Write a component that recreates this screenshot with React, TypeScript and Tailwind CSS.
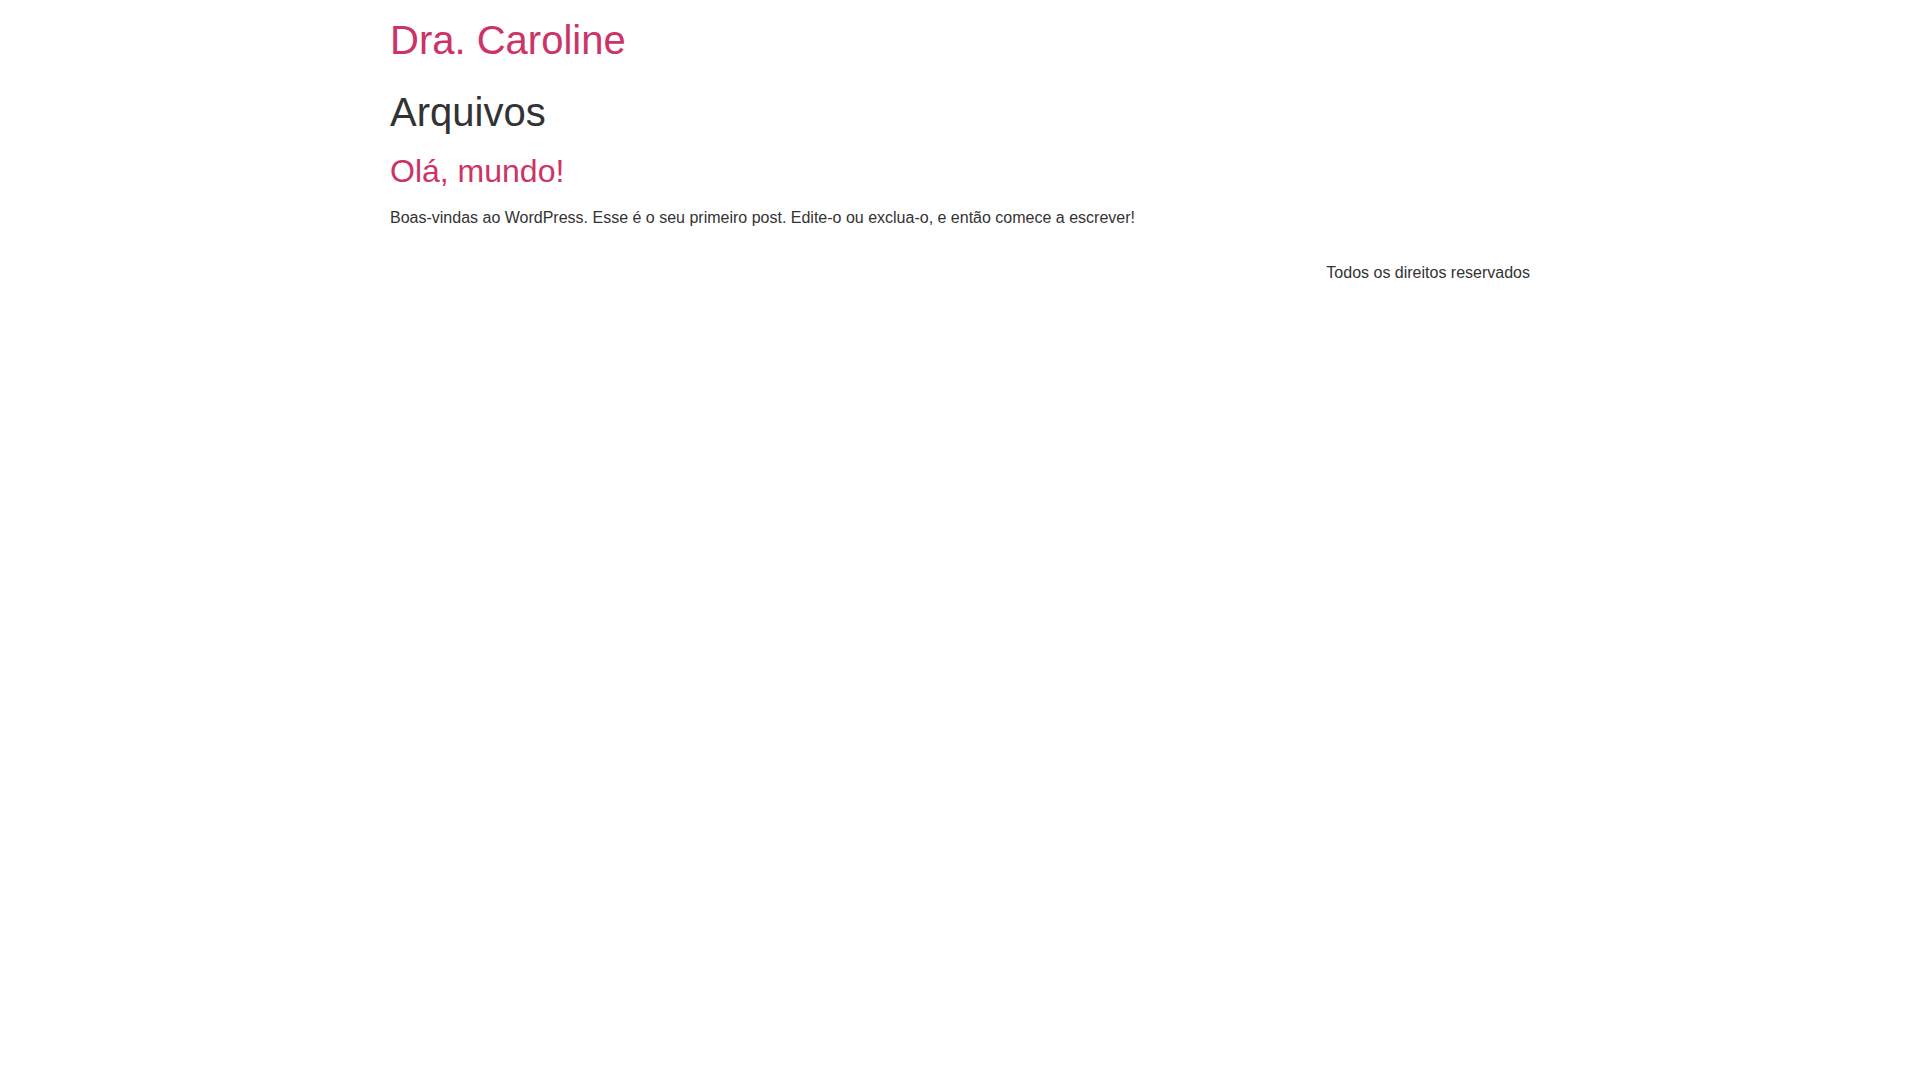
// Archive page (WordPress, Hello theme look)
const App = () => {
  return (
    <div className="min-h-screen bg-white text-[#333333] text-base leading-normal font-['Liberation_Sans',Arial,sans-serif]">
      <header className="mx-auto max-w-[1140px] pt-4 pb-4">
        <div className="site-branding">
          <h1 className="m-0 mb-2 text-[40px] leading-[1.2] font-normal">
            <a href="#" className="text-[#cc3366] no-underline">Dra. Caroline</a>
          </h1>
        </div>
      </header>

      <main className="mx-auto max-w-[1140px]">
        <div className="page-header">
          <h1 className="m-0 mb-4 text-[40px] leading-[1.2] font-normal">Arquivos</h1>
        </div>
        <div className="page-content">
          <article>
            <h2 className="m-0 mb-4 text-[32px] leading-[1.2] font-normal">
              <a href="#" className="text-[#cc3366] no-underline">Olá, mundo!</a>
            </h2>
            <p className="m-0 mb-[15px]">
              Boas-vindas ao WordPress. Esse é o seu primeiro post. Edite-o ou exclua-o, e então comece a escrever!
            </p>
          </article>
        </div>
      </main>

      <footer className="mx-auto max-w-[1140px] py-4">
        <div className="flex justify-end">
          <p className="m-0">Todos os direitos reservados</p>
        </div>
      </footer>
    </div>
  );
};

export default App;
